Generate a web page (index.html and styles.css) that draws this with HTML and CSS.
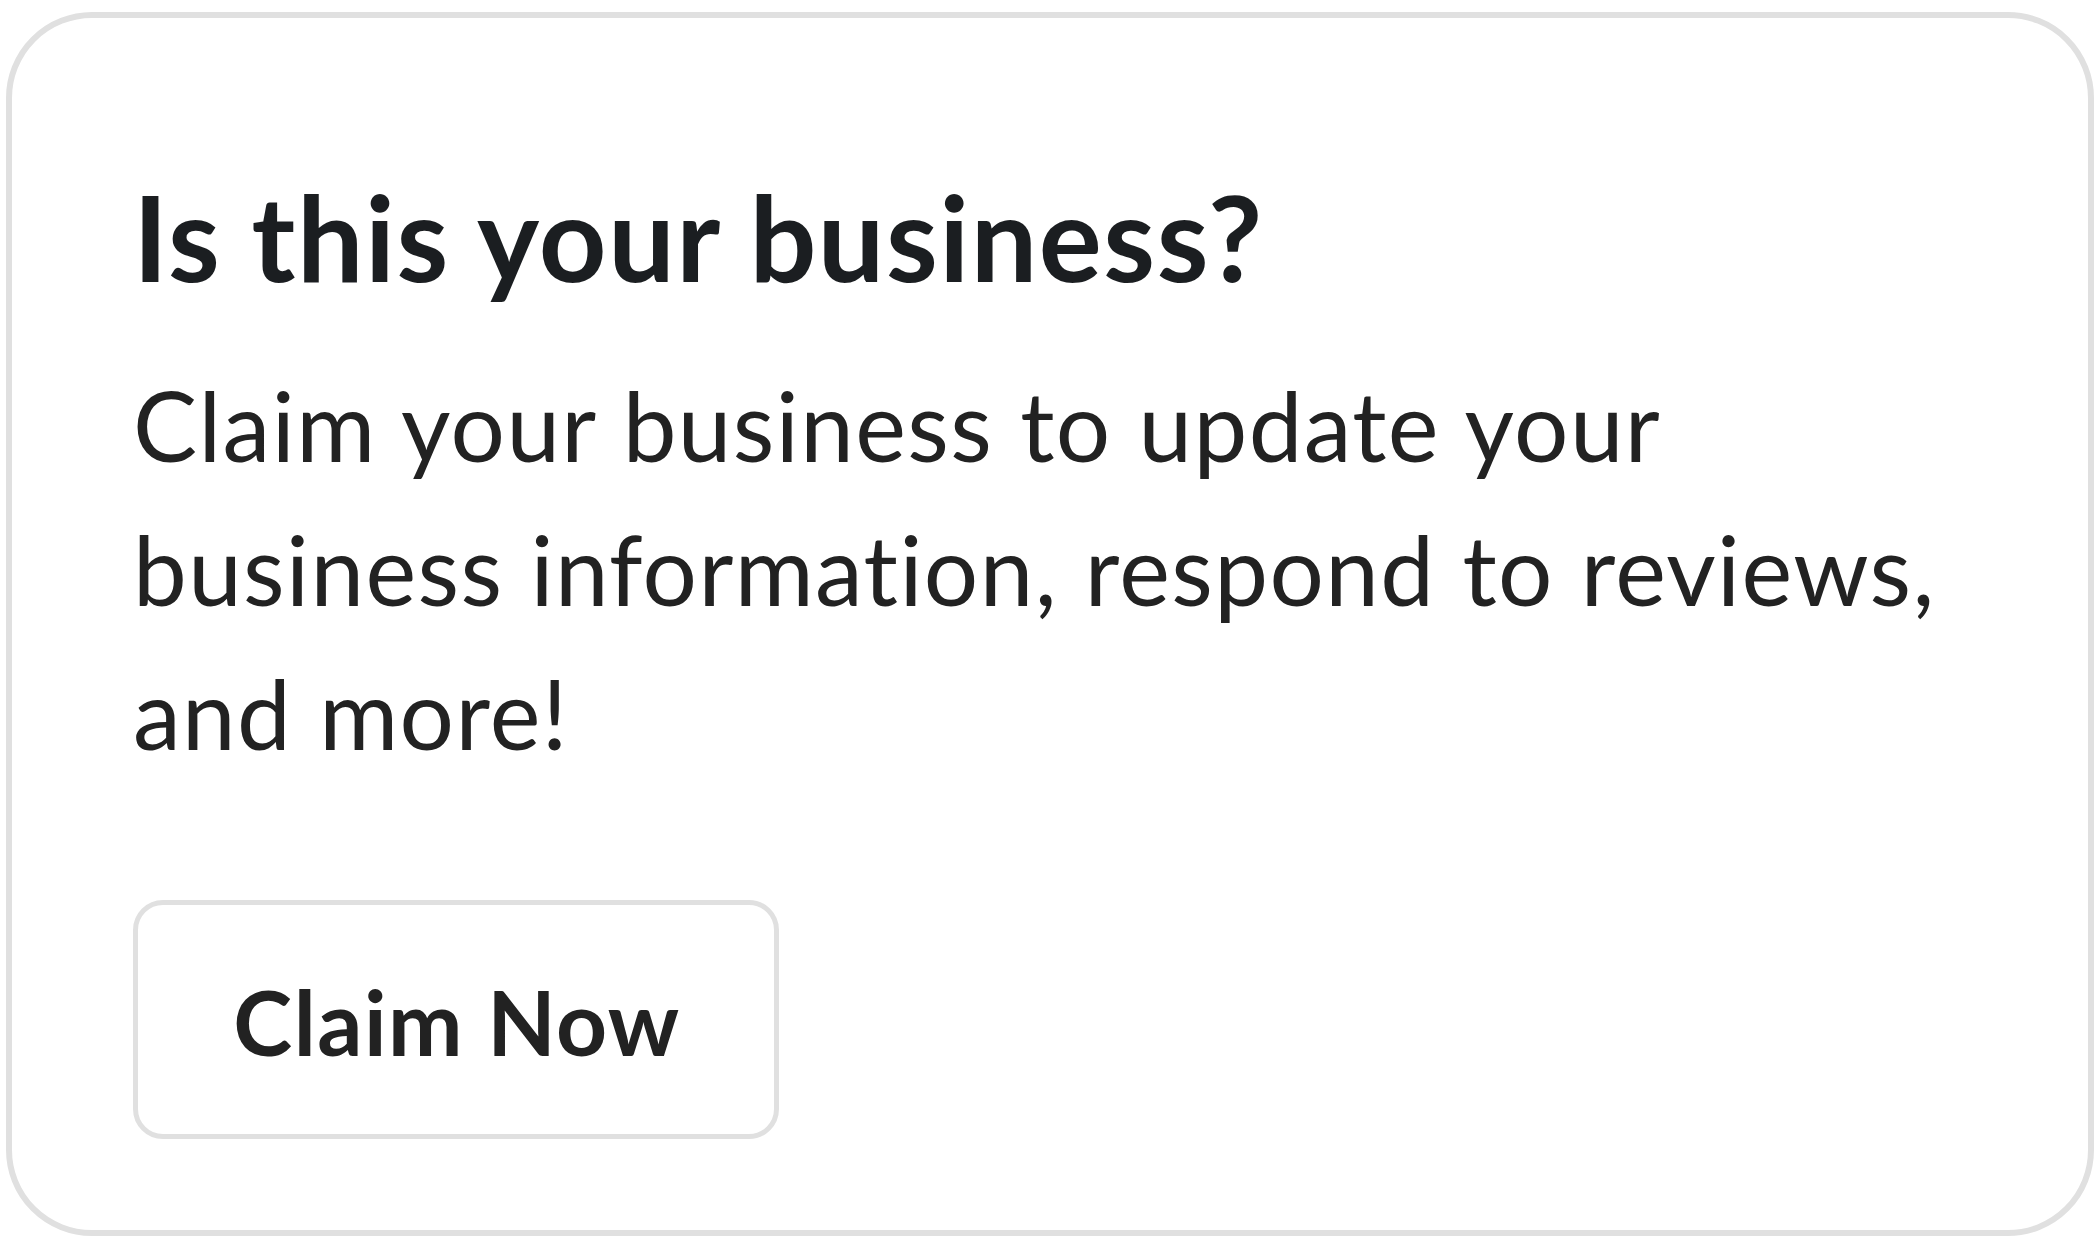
FILE: index.html
```html
<!DOCTYPE html>
<html lang="en">
<head>
<meta charset="utf-8">
<title>Is this your business?</title>
<link rel="stylesheet" href="styles.css">
</head>
<body>
  <section class="card">
    <h2 class="card-title">Is this your business?</h2>
    <p class="card-text">Claim your business to update your business information, respond to reviews, and more!</p>
    <button class="claim-btn" type="button">Claim Now</button>
  </section>
</body>
</html>
```

FILE: styles.css
```css
html, body {
  margin: 0;
  padding: 0;
  background: #ffffff;
}

body {
  padding: 12px 1px 6px 6px;
  font-family: Lato, "Open Sans", sans-serif;
}

.card {
  box-sizing: border-box;
  width: 2088px;
  height: 1224px;
  border: 6px solid #e0e0e0;
  border-radius: 86px;
  padding: 148px 100px 0 121px;
  display: flex;
  flex-direction: column;
  align-items: flex-start;
  background: #ffffff;
}

.card-title {
  margin: 0;
  font-size: 118px;
  line-height: 142px;
  font-weight: 700;
  letter-spacing: 1.5px;
  color: #1b1e21;
}

.card-text {
  margin: 45px 0 0 0;
  font-size: 96px;
  line-height: 144px;
  font-weight: 400;
  letter-spacing: 1.4px;
  word-spacing: 1px;
  color: #222222;
}

.claim-btn {
  margin-top: 115px;
  box-sizing: border-box;
  width: 646px;
  height: 239px;
  border: 5px solid #e0e0e0;
  border-radius: 30px;
  background: #ffffff;
  font-family: Lato, "Open Sans", sans-serif;
  font-size: 89px;
  font-weight: 700;
  letter-spacing: 1.5px;
  color: #222222;
  padding: 4px 0 0 2px;
  cursor: pointer;
}
```
